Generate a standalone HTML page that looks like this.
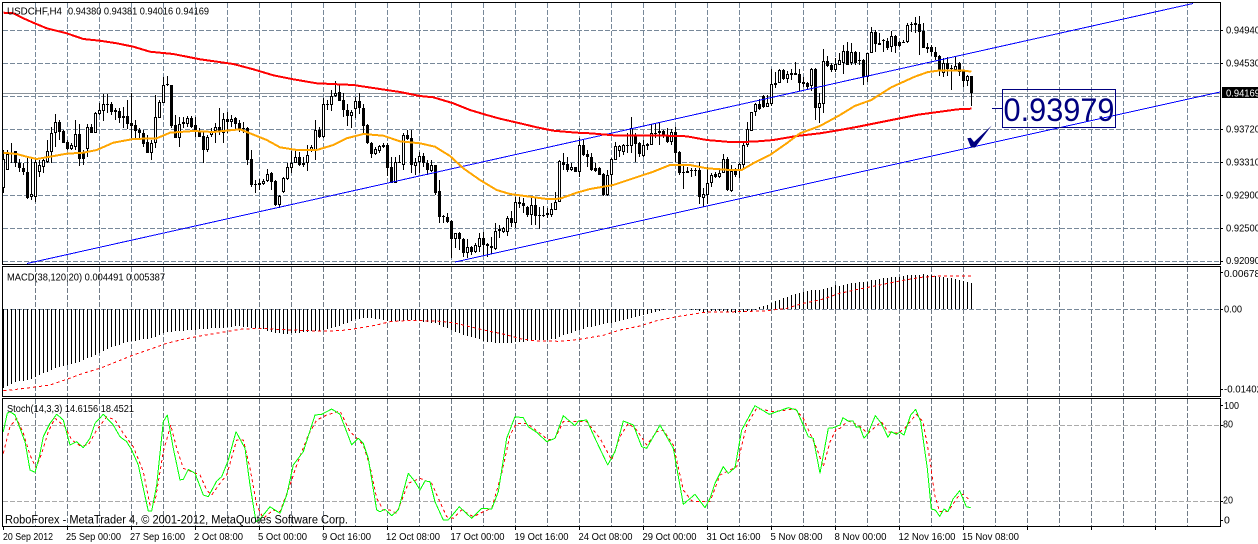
<!DOCTYPE html>
<html><head><meta charset="utf-8"><title>USDCHF,H4</title>
<style>
html,body{margin:0;padding:0;background:#fff;width:1258px;height:544px;overflow:hidden}
svg{display:block}
text{font-family:"Liberation Sans",sans-serif;font-size:10.5px;fill:#000}
</style></head><body>
<svg id="s" xmlns="http://www.w3.org/2000/svg" width="1258" height="544" viewBox="0 0 1258 544">
<g id="grid" shape-rendering="crispEdges"></g>
<g id="plot"></g>
<polygon points="967.3,138.3 970.7,137.7 974,142 991.7,125.5 975,147.5 971,147.5" fill="#000080"/>
<g shape-rendering="crispEdges" fill="none" stroke="#000080">
<rect x="1002.5" y="89.5" width="113" height="38"/>
<path d="M992 108.5H1002"/>
</g>
<text x="1003.5" y="121" textLength="111" lengthAdjust="spacingAndGlyphs" style="font-size:32px;fill:#000080">0.93979</text>
<g shape-rendering="crispEdges" fill="none" stroke="#000">
<rect x="2.5" y="2.5" width="1218" height="262"/>
<rect x="2.5" y="266.5" width="1218" height="130"/>
<rect x="2.5" y="398.5" width="1218" height="128"/>
</g>
<rect x="1222" y="87" width="36" height="11" fill="#000" shape-rendering="crispEdges"/>
<g id="ticks" shape-rendering="crispEdges"></g>
<text x="7" y="14.5" textLength="55" lengthAdjust="spacingAndGlyphs">USDCHF,H4</text>
<text x="68" y="14.5" textLength="141" lengthAdjust="spacingAndGlyphs">0.94380 0.94381 0.94016 0.94169</text>
<text x="7" y="280.5" textLength="158" lengthAdjust="spacingAndGlyphs">MACD(38,120,20) 0.004491 0.005387</text>
<text x="7" y="412" textLength="127" lengthAdjust="spacingAndGlyphs">Stoch(14,3,3) 14.6156 18.4521</text>
<text x="5" y="523.5" textLength="343" lengthAdjust="spacingAndGlyphs" style="font-size:11.5px">RoboForex - MetaTrader 4, © 2001-2012, MetaQuotes Software Corp.</text>
<text x="1226" y="33.5" textLength="34" lengthAdjust="spacingAndGlyphs">0.94940</text>
<text x="1226" y="66.5" textLength="34" lengthAdjust="spacingAndGlyphs">0.94530</text>
<text x="1226" y="96.5" textLength="34" lengthAdjust="spacingAndGlyphs" style="fill:#fff">0.94169</text>
<text x="1226" y="132.5" textLength="34" lengthAdjust="spacingAndGlyphs">0.93720</text>
<text x="1226" y="165.5" textLength="34" lengthAdjust="spacingAndGlyphs">0.93310</text>
<text x="1226" y="198.5" textLength="34" lengthAdjust="spacingAndGlyphs">0.92900</text>
<text x="1226" y="231.5" textLength="34" lengthAdjust="spacingAndGlyphs">0.92500</text>
<text x="1226" y="264" textLength="34" lengthAdjust="spacingAndGlyphs">0.92090</text>
<text x="1224" y="277" textLength="36" lengthAdjust="spacingAndGlyphs">0.00678</text>
<text x="1224" y="312.5" textLength="18" lengthAdjust="spacingAndGlyphs">0.00</text>
<text x="1224" y="392.5" textLength="38" lengthAdjust="spacingAndGlyphs">-0.01402</text>
<text x="1224" y="409" textLength="15" lengthAdjust="spacingAndGlyphs">100</text>
<text x="1223" y="427.5" textLength="10" lengthAdjust="spacingAndGlyphs">80</text>
<text x="1223" y="503.5" textLength="10" lengthAdjust="spacingAndGlyphs">20</text>
<text x="1224" y="523.5">0</text>
<text x="3" y="540" textLength="50" lengthAdjust="spacingAndGlyphs">20 Sep 2012</text>
<text x="66" y="540" textLength="55" lengthAdjust="spacingAndGlyphs">25 Sep 00:00</text>
<text x="130" y="540" textLength="55" lengthAdjust="spacingAndGlyphs">27 Sep 16:00</text>
<text x="194" y="540" textLength="49" lengthAdjust="spacingAndGlyphs">2 Oct 08:00</text>
<text x="258" y="540" textLength="49" lengthAdjust="spacingAndGlyphs">5 Oct 00:00</text>
<text x="322" y="540" textLength="49" lengthAdjust="spacingAndGlyphs">9 Oct 16:00</text>
<text x="386" y="540" textLength="54" lengthAdjust="spacingAndGlyphs">12 Oct 08:00</text>
<text x="450.5" y="540" textLength="54" lengthAdjust="spacingAndGlyphs">17 Oct 00:00</text>
<text x="514.5" y="540" textLength="54" lengthAdjust="spacingAndGlyphs">19 Oct 16:00</text>
<text x="578.5" y="540" textLength="54" lengthAdjust="spacingAndGlyphs">24 Oct 08:00</text>
<text x="642.5" y="540" textLength="54" lengthAdjust="spacingAndGlyphs">29 Oct 00:00</text>
<text x="706.5" y="540" textLength="54" lengthAdjust="spacingAndGlyphs">31 Oct 16:00</text>
<text x="770.5" y="540" textLength="52" lengthAdjust="spacingAndGlyphs">5 Nov 08:00</text>
<text x="834.5" y="540" textLength="52" lengthAdjust="spacingAndGlyphs">8 Nov 00:00</text>
<text x="898.5" y="540" textLength="57" lengthAdjust="spacingAndGlyphs">12 Nov 16:00</text>
<text x="962" y="540" textLength="57" lengthAdjust="spacingAndGlyphs">15 Nov 08:00</text>
</svg>
<script>
var NS="http://www.w3.org/2000/svg";
function el(p,n,a){var e=document.createElementNS(NS,n);for(var k in a)e.setAttribute(k,a[k]);document.getElementById(p).appendChild(e);return e}
var g="",i,k;
for(k=0;k<37;k++){var vx=35.5+32*k;g+="M"+vx+" 3V264"}
el("grid","path",{d:g,fill:"none",stroke:"#778899","stroke-dasharray":"5 2"});
g="";[30,63,96,129,162,195,228,261].forEach(function(y){g+="M3 "+(y+.5)+"H1220"});
el("grid","path",{d:g,fill:"none",stroke:"#778899","stroke-dasharray":"5 2"});
el("grid","path",{d:"M3 93.5H1220",fill:"none",stroke:"#8a929a"});
g="";for(k=0;k<37;k++){var vx=35.5+32*k;g+="M"+vx+" 267V396M"+vx+" 399V526"}
el("grid","path",{d:g,fill:"none",stroke:"#6f7a86","stroke-dasharray":"5 2"});
el("grid","path",{d:"M3 309.5H1220",fill:"none",stroke:"#778899","stroke-dasharray":"5 2"});
el("grid","path",{d:"M3 425.5H1220M3 501.5H1220",fill:"none",stroke:"#aaaaaa","stroke-dasharray":"5 2"});
/* candles: hi,lo,top,bot,white(1)/black(0) in 3x px */
var C=[[450,578,478,565,1],[450,510,462,510,1],[430,490,458,462,1],[452,500,452,490,0],[478,515,488,505,0],[490,525,505,515,0],[470,597,515,593,0],[476,600,582,592,1],[475,605,485,590,1],[480,530,495,515,1],[470,520,480,500,1],[420,488,452,485,1],[380,488,398,456,1],[342,440,367,398,1],[360,420,365,395,0],[390,430,393,430,0],[420,450,425,447,0],[430,450,435,447,1],[360,450,403,440,1],[372,497,402,478,0],[450,495,455,478,0],[372,470,382,448,1],[372,400,382,398,0],[335,400,340,400,1],[308,345,330,342,1],[282,362,313,333,1],[282,340,312,316,0],[305,345,312,335,0],[325,360,330,335,0],[325,370,332,354,0],[322,385,348,354,0],[300,388,348,372,0],[280,415,370,378,0],[360,420,376,392,0],[385,420,390,400,0],[390,442,398,432,0],[405,458,425,458,0],[420,480,428,458,1],[285,445,350,428,1],[300,355,306,355,1],[232,310,255,308,1],[228,258,252,256,0],[254,385,255,378,0],[345,415,375,414,0],[350,440,372,414,1],[350,385,366,373,1],[348,380,355,373,1],[348,385,355,382,0],[350,412,376,395,0],[385,412,392,412,0],[395,488,408,450,0],[405,455,410,450,1],[385,410,392,405,1],[368,430,380,392,1],[325,405,380,395,0],[340,430,358,398,1],[335,400,358,365,0],[345,380,358,365,1],[350,390,355,372,0],[360,395,368,388,0],[365,400,385,388,0],[380,495,385,480,0],[450,560,478,556,0],[540,578,552,556,0],[538,570,550,554,0],[538,555,543,551,1],[508,545,522,544,1],[515,570,520,546,0],[540,618,544,615,0],[585,625,588,615,1],[530,580,535,577,1],[488,540,502,537,1],[452,520,490,503,1],[450,490,472,490,1],[455,498,470,495,0],[470,500,488,496,0],[435,512,465,490,1],[435,455,440,452,1],[360,480,390,452,1],[380,415,390,410,0],[295,415,313,410,1],[300,330,313,316,0],[270,332,288,316,1],[243,290,278,288,1],[255,303,276,302,0],[280,350,300,330,0],[312,378,330,347,0],[330,385,336,347,1],[290,355,303,328,1],[278,342,303,325,0],[312,400,323,378,0],[372,432,375,430,0],[425,475,428,462,0],[440,465,447,462,1],[435,458,438,452,1],[428,445,436,440,0],[430,528,436,504,0],[470,550,502,548,0],[470,550,487,548,1],[465,490,485,488,0],[398,510,405,496,1],[390,420,405,417,0],[390,520,415,495,0],[475,525,485,497,1],[455,520,467,485,1],
[460,500,468,490,0],[480,525,488,510,0],[480,515,495,512,1],[495,585,495,580,0],[540,668,573,650,0],[645,668,648,650,0],[640,670,650,665,0],[660,775,663,716,0],[698,745,700,716,1],[695,750,698,718,0],[715,770,716,758,0],[718,775,742,758,1],[738,765,740,756,0],[730,760,735,756,1],[698,755,714,740,1],[695,765,714,735,0],[728,770,732,738,0],[710,762,738,745,0],[670,750,692,746,1],[675,715,686,692,0],[680,700,685,695,1],[648,708,653,695,1],[632,682,654,670,0],[590,685,606,670,1],[590,625,606,612,0],[595,640,610,618,0],[618,650,622,645,0],[595,675,615,645,1],[595,675,614,648,0],[620,688,645,648,0],[618,652,644,648,0],[625,655,640,645,0],[610,650,628,645,1],[575,630,605,630,1],[480,605,484,605,1],[460,510,487,494,0],[470,515,492,510,0],[490,512,502,510,1],[500,515,502,515,0],[415,530,436,515,1],[418,468,436,466,0],[450,500,462,470,0],[460,512,470,510,0],[490,515,505,512,0],[500,525,505,525,0],[520,587,522,585,0],[510,587,524,585,1],[475,560,477,524,1],[425,480,438,480,1],[435,470,438,452,1],[432,465,435,456,1],[400,458,435,437,0],[352,460,385,437,1],[400,487,408,432,0],[425,470,430,463,0],[420,470,435,467,1],[430,450,432,437,1],[372,436,400,434,1],[370,415,400,402,0],[370,435,394,400,1],[390,415,394,408,0],[385,430,405,425,0],[388,435,395,425,1],[382,485,395,458,0],[452,525,456,520,0],[495,568,516,520,0],[500,520,514,518,0],[505,530,510,514,0],[505,528,510,514,0],[485,612,510,592,0],[565,622,583,593,1],[500,612,548,585,1],[520,560,524,548,1],[515,535,522,530,0],[510,535,518,530,1],[463,520,478,518,1],[470,572,478,570,0],[495,575,512,573,1],[505,530,512,525,0],[490,535,493,512,1],[430,505,436,495,1],[365,440,388,436,1],[335,392,337,392,1],[308,348,312,335,1],[298,330,312,328,0],[285,325,288,322,0],[285,322,310,320,1],[208,318,253,312,1],[215,263,248,254,1],[208,250,210,250,1],[208,240,210,238,0],[212,248,222,238,1],[208,240,220,224,0],[186,225,220,224,0],[208,272,222,248,0],[230,262,246,252,0],[245,268,250,262,0],[205,272,207,258,1],[205,360,206,324,0],[280,368,310,324,1],[148,340,184,312,1],[168,200,183,197,0],[190,215,194,210,0],[175,215,192,210,1],
[160,195,180,194,1],[135,222,153,190,1],[125,195,153,195,0],[130,195,155,190,1],[152,195,155,190,0],[155,195,180,184,0],[178,255,180,230,0],[158,245,160,232,1],[82,160,97,160,1],[90,155,95,133,0],[100,135,128,135,0],[118,155,120,123,0],[115,150,122,145,0],[92,155,108,142,1],[105,158,108,138,0],[122,140,125,137,0],[120,130,125,128,0],[68,130,75,126,1],[65,95,72,75,1],[52,100,70,74,0],[48,165,72,95,0],[70,145,92,143,0],[128,160,142,146,0],[135,168,142,155,0],[142,180,155,170,0],[165,228,168,210,0],[175,230,190,218,1],[170,228,190,208,0],[195,270,205,208,0],[170,212,198,210,1],[185,228,188,215,0],[210,262,213,242,0],[225,258,228,242,1],[228,318,228,280,0]];
var b="",w="";
C.forEach(function(c,i){var x=3+4*i,h=Math.round(c[0]/3),l=Math.round(c[1]/3),t=Math.round(c[2]/3),o=Math.max(t+1,Math.round(c[3]/3));
b+="M"+(x-1)+" "+t+"h3V"+o+"h-3z";
if(c[4]&&o-t>2)w+="M"+x+" "+(t+1)+"h1V"+(o-1)+"h-1z"});
el("plot","path",{d:b,fill:"#000","shape-rendering":"crispEdges"});
var wk="";C.forEach(function(c,i){wk+="M"+(3.5+4*i)+" "+Math.round(c[0]/3)+"V"+Math.round(c[1]/3)});
el("plot","path",{d:wk,fill:"none",stroke:"#000","shape-rendering":"crispEdges"});
el("plot","path",{d:w,fill:"#fff","shape-rendering":"crispEdges"});
function pts(a,ox,oy){var s=[];for(var i=0;i<a.length;i+=2)s.push((ox+a[i]/3).toFixed(1)+","+(oy+a[i+1]/3).toFixed(1));return s.join(" ")}
function line(str,c,wd,d){var a={points:str,fill:"none",stroke:c,"stroke-width":wd,"stroke-linejoin":"round","shape-rendering":"crispEdges"};if(d)a["stroke-dasharray"]=d;el("plot","polyline",a)}
/* channel lines */
line("27,263.5 1193,3.5","#0000ff",1);
line("455,262 1220,92","#0000ff",1);
/* MA red */
line(pts([10,38,40,40,70,55,100,68,140,85,200,100,250,117,300,122,350,130,400,140,450,155,520,162,600,178,700,192,760,208,820,226,880,238,950,250,1060,255,1120,264,1200,276,1260,288],0,0)+" "+pts([40,292,100,310,150,330,200,345,240,356,300,370,350,382,400,392,470,398,510,400,580,406,700,406,800,409,860,420,930,426,1000,425,1060,420,1130,408,1200,400,1260,390],420,0)+" "+pts([60,380,120,368,180,356,240,344,300,336,360,328,400,326],838,0),"#ff0000",2);
/* MA orange */
line(pts([10,458,50,462,80,470,110,477,140,472,200,461,250,458,290,450,340,428,400,417,470,415,510,398,580,393,640,396,720,388,750,400,800,420,840,442,890,450,950,450,1000,435,1040,415,1090,402,1150,407,1200,424,1260,430],0,0)+" "+pts([45,440,90,468,130,505,180,540,230,570,270,582,330,590,380,597,420,596,470,578,510,567,580,555,640,535,700,515,750,495,810,495,860,505,930,510,965,510,1000,490,1050,465,1100,430,1140,400,1200,378,1260,345],420,0)+" "+pts([50,318,100,300,160,262,230,230,270,216,300,212,380,212,400,215],838,0),"#ffa500",2);
/* MACD bars */
var M=[385,378,372,366,364,362,360,356,350,345,340,335,330,325,322,318,315,312,308,305,300,295,290,285,278,272,268,262,258,254,250,247,244,242,240,238,236,234,232,225,218,215,215,214,212,212,210,210,209,208,207,206,205,204,204,203,201,200,199,199,200,202,205,205,205,208,212,215,218,220,222,222,220,218,218,216,216,214,214,213,210,206,204,202,198,192,188,184,178,176,175,175,175,176,178,180,182,184,184,183,182,181,181,182,183,
185,186,188,190,195,200,205,210,216,220,224,228,232,235,238,243,245,246,248,249,249,249,248,247,246,245,243,242,241,241,241,240,238,236,232,226,222,218,214,210,206,202,200,198,195,193,190,188,186,182,180,176,173,170,168,165,162,159,156,152,150,149,149,149,149,149,149,150,150,152,155,156,154,154,154,154,156,157,158,156,155,154,153,150,142,138,135,128,124,120,114,110,105,102,100,95,92,91,90,90,87,84,82,75,78,
75,72,70,69,67,67,66,61,60,57,55,53,52,52,50,48,46,45,44,44,43,44,45,47,50,52,53,55,56,60,63,65,69];
var mp="";M.forEach(function(v,i){var y=260+v/3;if(Math.abs(y-309)<.8)return;mp+="M"+(3.5+4*i)+" 309V"+Math.round(y)});
el("plot","path",{d:mp,fill:"none",stroke:"#000","shape-rendering":"crispEdges"});
line(pts([10,392,50,388,100,382,150,375,200,358,250,340,300,325,350,305,400,285,450,268,500,250,550,238,600,228,660,218,720,208,780,205,830,208,880,210,950,213,1020,212,1060,207,1130,195,1170,185,1230,181,1260,182],0,260)+" "+pts([10,182,60,184,100,188,150,200,200,212,250,222,300,236,350,243,420,244,480,238,550,226,600,210,660,198,710,182,770,170,860,156,960,155,1040,152,1100,145,1150,130,1200,120,1260,100],420,260)+" "+pts([60,88,100,80,150,70,200,60,250,52,300,48,400,48],838,260),"#ff0000",1,"3 3");
/* Stochastic */
line(pts([10,175,30,95,50,70,70,115,90,180,108,218,125,175,145,110,165,70,195,95,215,135,240,152,265,150,290,105,320,65,345,75,370,115,400,155,430,230,450,330,465,320,490,170,512,90,530,160,550,220,575,230,600,240,620,285,635,300,660,265,680,240,710,135,730,135,750,220,770,330,790,370,820,345,840,350,870,270,890,210,925,120,950,75,980,60,1020,48,1050,110,1090,150,1110,215,1130,310,1150,345,1170,345,1190,355,1225,265,1260,250],0,395)+" "+pts([35,265,55,310,80,365,100,370,125,345,160,365,190,350,215,340,245,235,270,120,290,85,320,85,360,115,385,135,405,130,430,80,460,80,500,80,540,130,575,195,600,125,625,85,650,105,680,150,710,110,730,105,760,150,790,285,815,318,850,320,870,320,900,240,950,215,980,90,1010,40,1060,50,1125,42,1150,70,1190,160,1210,215,1230,140,1250,100,1260,100],420,395)+" "+pts([30,78,60,90,90,115,130,80,150,110,180,115,200,100,235,58,255,80,275,190,290,300,305,350,330,350,360,305,375,298,395,315],838,395),"#ff0000",1,"3 3");
line(pts([10,110,22,55,30,50,45,60,60,100,75,140,90,225,105,232,118,185,130,125,150,85,170,58,190,75,210,150,230,140,250,158,270,130,285,85,310,58,340,90,360,125,380,140,395,165,415,210,430,280,445,348,455,348,470,270,490,80,502,60,520,160,540,255,550,253,565,223,585,235,610,300,625,305,650,258,665,245,685,195,708,110,735,160,750,270,768,380,778,375,810,335,840,355,860,300,880,210,910,170,945,60,965,58,995,42,1020,58,1055,150,1075,130,1090,145,1105,190,1130,345,1140,350,1155,343,1175,362,1195,345,1225,235,1245,260,1260,285],0,395)+" "+pts([15,258,30,260,45,320,70,375,85,375,118,335,155,370,185,340,215,342,235,290,260,130,285,65,310,68,325,95,350,112,380,140,405,130,430,62,465,92,475,78,500,75,525,130,563,210,585,170,610,78,640,90,665,155,680,160,720,90,760,160,790,328,825,298,855,338,870,310,885,265,910,215,925,235,945,218,965,105,1005,32,1048,58,1105,38,1130,45,1165,125,1180,130,1200,235,1225,100,1240,98,1260,90],420,395)+" "+pts([15,68,30,78,45,78,55,97,65,95,78,130,90,115,112,62,130,85,150,127,160,110,175,118,185,112,198,120,218,60,233,43,248,80,268,220,280,342,292,345,305,364,318,342,330,350,345,312,365,287,385,335,398,338],838,395),"#00ff00",1);
/* ticks */
var t="";[30,63,129,162,195,228,261,272,309,389,405,425,501,520].forEach(function(y){t+="M1221 "+(y+.5)+"h2"});
for(k=0;k<19;k++){t+="M"+(3.5+64*k)+" 527v3"}
el("ticks","path",{d:t,fill:"none",stroke:"#000"});
</script>
</body></html>
